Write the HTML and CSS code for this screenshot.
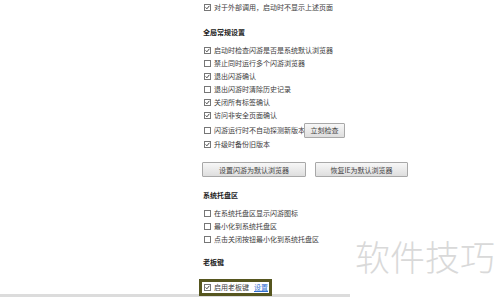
FILE: index.html
```html
<!DOCTYPE html>
<html lang="zh">
<head>
<meta charset="utf-8">
<link rel="stylesheet" href="styles.css">
</head>
<body>
<div class="screen">
  <div class="panel">
    <div class="content">
      <div class="row"><span class="cb on"><svg viewBox="0 0 5 5"><polyline points="0.6,2.4 1.9,3.8 4.4,0.8"/></svg></span><span>对于外部调用，启动时不显示上述页面</span></div>

      <div class="heading">全局常规设置</div>
      <div class="row"><span class="cb on"><svg viewBox="0 0 5 5"><polyline points="0.6,2.4 1.9,3.8 4.4,0.8"/></svg></span><span>启动时检查闪游是否是系统默认浏览器</span></div>
      <div class="row"><span class="cb"></span><span>禁止同时运行多个闪游浏览器</span></div>
      <div class="row"><span class="cb on"><svg viewBox="0 0 5 5"><polyline points="0.6,2.4 1.9,3.8 4.4,0.8"/></svg></span><span>退出闪游确认</span></div>
      <div class="row"><span class="cb"></span><span>退出闪游时清除历史记录</span></div>
      <div class="row"><span class="cb on"><svg viewBox="0 0 5 5"><polyline points="0.6,2.4 1.9,3.8 4.4,0.8"/></svg></span><span>关闭所有标签确认</span></div>
      <div class="row"><span class="cb on"><svg viewBox="0 0 5 5"><polyline points="0.6,2.4 1.9,3.8 4.4,0.8"/></svg></span><span>访问非安全页面确认</span></div>
      <div class="row row-btn"><span class="cb"></span><span>闪游运行时不自动探测新版本</span><span class="btn btn-small">立刻检查</span></div>
      <div class="row"><span class="cb on"><svg viewBox="0 0 5 5"><polyline points="0.6,2.4 1.9,3.8 4.4,0.8"/></svg></span><span>升级时备份旧版本</span></div>
      <div class="btn-row">
        <span class="btn btn-wide">设置闪游为默认浏览器</span>
        <span class="btn btn-mid">恢复IE为默认浏览器</span>
      </div>

      <div class="heading">系统托盘区</div>
      <div class="row"><span class="cb"></span><span>在系统托盘区显示闪游图标</span></div>
      <div class="row"><span class="cb"></span><span>最小化到系统托盘区</span></div>
      <div class="row"><span class="cb"></span><span>点击关闭按钮最小化到系统托盘区</span></div>

      <div class="heading heading-boss">老板键</div>
      <div class="highlight">
        <div class="row row-tight"><span class="cb on"><svg viewBox="0 0 5 5"><polyline points="0.6,2.4 1.9,3.8 4.4,0.8"/></svg></span><span>启用老板键</span><a class="link">设置</a></div>
      </div>
    </div>
  </div>
  <div class="watermark">软件技巧</div>
</div>
</body>
</html>
```

FILE: styles.css
```css
html, body {
  margin: 0;
  padding: 0;
}
body {
  width: 500px;
  height: 297px;
  overflow: hidden;
  background: #ffffff;
  font-family: "Noto Sans CJK SC", "Noto Sans", sans-serif;
  font-size: 7px;
  color: #3c3c3c;
}
.screen {
  position: relative;
  width: 500px;
  height: 297px;
}
.panel {
  width: 350px;
  height: 294px;
  border-bottom: 3px solid #dcdcdc;
}
.content {
  display: flex;
  flex-direction: column;
  align-items: flex-start;
  padding: 1px 0 0 204px;
}
.row {
  display: flex;
  align-items: center;
  height: 13px;
  line-height: 13px;
  white-space: nowrap;
}
.row-btn {
  height: 16px;
}
.row-tight {
  height: 11px;
  line-height: 11px;
}
.cb {
  flex: none;
  width: 5px;
  height: 5px;
  border: 1px solid #767676;
  background: #ffffff;
  margin-right: 3px;
  display: flex;
}
.cb svg {
  width: 5px;
  height: 5px;
}
.cb polyline {
  fill: none;
  stroke: #333333;
  stroke-width: 0.9;
}
.heading {
  height: 13px;
  line-height: 13px;
  font-weight: bold;
  color: #222222;
  margin: 12px 0 5px -1px;
}
.heading-boss {
  margin-top: 10px;
  margin-bottom: 5px;
}
.btn {
  display: flex;
  align-items: center;
  justify-content: center;
  box-sizing: border-box;
  height: 15px;
  border: 1px solid #a8a8a8;
  border-radius: 1px;
  background: linear-gradient(#f7f7f7, #dedede);
  color: #444444;
  white-space: nowrap;
}
.btn-small {
  width: 41px;
  margin-left: -1px;
}
.btn-row {
  display: flex;
  gap: 9px;
  margin: 11px 0 0 -2px;
}
.btn-wide {
  width: 104px;
}
.btn-mid {
  width: 93px;
}
.highlight {
  margin: 5px 0 0 -5px;
  border: 3px solid #56561f;
  padding: 0 1px 0 2px;
}
.link {
  margin-left: 5px;
  color: #2f6fd0;
  text-decoration: underline;
}
.watermark {
  position: absolute;
  left: 355px;
  top: 238px;
  font-size: 35px;
  font-weight: 300;
  line-height: 1;
  color: #d9d9d9;
  white-space: nowrap;
}
```
